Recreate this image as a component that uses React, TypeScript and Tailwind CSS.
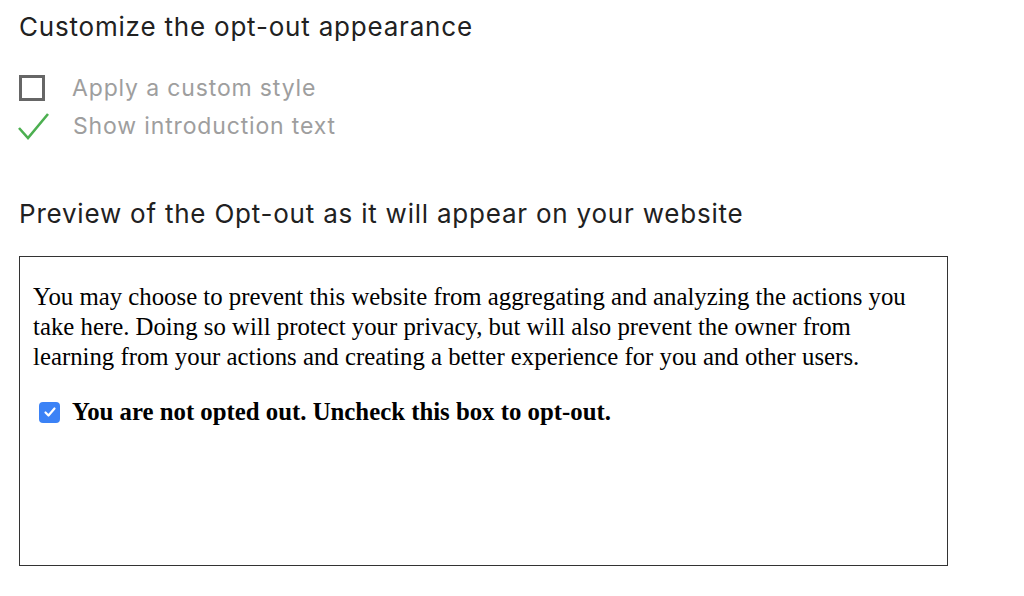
export default function App() {
  return (
    <div className="min-h-[596px] w-[1024px] bg-white font-['Inter','Liberation_Sans',sans-serif]">
      <div className="px-[19px] pt-[9px]">
        <h2 className="text-[26px] leading-[36px] tracking-[0.8px] text-[#212121]">Customize the opt-out appearance</h2>

        <div className="mt-[24px] flex flex-col">
          <label className="flex h-[38px] items-center gap-[27px]">
            <span className="block h-[26px] w-[26px] border-[3px] border-[#666]" />
            <span className="text-[23px] tracking-[0.85px] text-[#9e9e9e]">Apply a custom style</span>
          </label>
          <label className="flex h-[38px] items-center gap-[23px]">
            <svg width="33" height="28" viewBox="0 0 33 28" className="-ml-[2px]">
              <path d="M2 16 L11 26 L31 2" fill="none" stroke="#4caf50" strokeWidth="2.6" />
            </svg>
            <span className="text-[23px] tracking-[0.85px] text-[#9e9e9e]">Show introduction text</span>
          </label>
        </div>

        <h2 className="mt-[51px] text-[26px] leading-[36px] tracking-[0.78px] text-[#212121]">
          Preview of the Opt-out as it will appear on your website
        </h2>

        <div className="mt-[24px] h-[310px] w-[929px] border border-[#333] px-[13px] pt-[25px] font-['Liberation_Serif',serif] text-black">
          <p className="text-[24.8px] leading-[30px]">
            You may choose to prevent this website from aggregating and analyzing the actions you take here. Doing so will protect your privacy, but will also prevent the owner from learning from your actions and creating a better experience for you and other users.
          </p>
          <label className="mt-[25px] flex items-center gap-[12px] pl-[6px]">
            <span className="flex h-[21px] w-[21px] items-center justify-center rounded-[4px] bg-[#3b82f6]">
              <svg width="14" height="14" viewBox="0 0 14 14">
                <path d="M2.5 7.5 L5.5 10.5 L11.5 3.5" fill="none" stroke="white" strokeWidth="2.2" strokeLinecap="round" strokeLinejoin="round" />
              </svg>
            </span>
            <span className="text-[24.8px] leading-[30px] font-bold">You are not opted out. Uncheck this box to opt-out.</span>
          </label>
        </div>
      </div>
    </div>
  );
}
